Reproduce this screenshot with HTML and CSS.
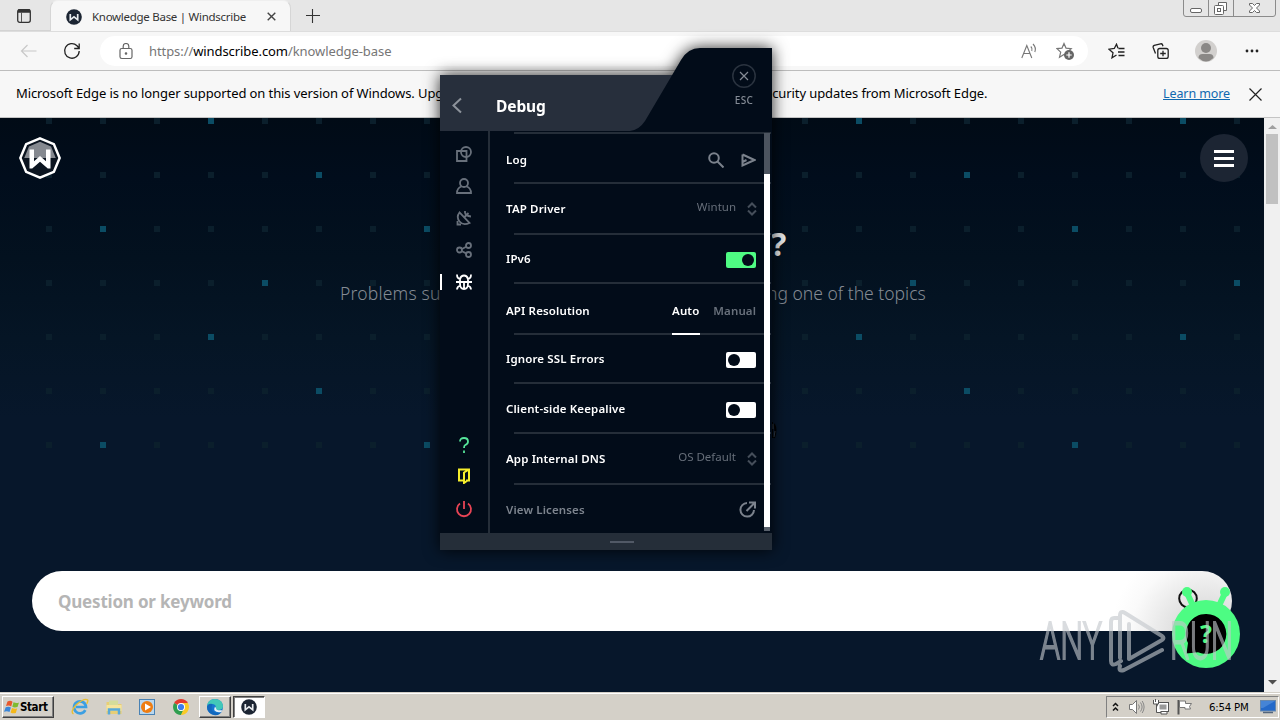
FILE: index.html
```html
<!DOCTYPE html>
<html lang="en">
<head>
<meta charset="utf-8">
<title>Knowledge Base | Windscribe</title>
<link rel="stylesheet" href="styles.css">
</head>
<body>
<svg width="0" height="0" class="defs">
  <defs>
    <symbol id="wlogo" viewBox="0 0 40 40">
      <path d="M20 1.3 33.2 6.8 38.7 20 33.2 33.2 20 38.7 6.8 33.2 1.3 20 6.8 6.8Z" fill="#0b1420" stroke="#fff" stroke-width="2.4"/>
      <path d="M20 4.500 30.500 9l4.500 11H5L9.500 9Z" fill="#858990"/>
      <path d="M14 20h12v4H14Z" fill="#0b1420"/>
      <path d="M10 12h4.300v11L20 18l5.700 5V12H30V30h-2.600L20 23.500l-7.400 6.500H10Z" fill="#fff"/>
    </symbol>
    <symbol id="wbadge" viewBox="0 0 16 16">
      <circle cx="8" cy="8" r="7.800" fill="#1c2533"/>
      <path d="M4.300 5v5.800L8 7.800l3.700 3V5" fill="none" stroke="#e8ebee" stroke-width="1.700"/>
    </symbol>
    <symbol id="updown" viewBox="0 0 10 14"><path d="M1 5.500 5 1.500l4 4M1 8.500l4 4 4-4" fill="none" stroke="#454e5a" stroke-width="2"/></symbol>
  </defs>
</svg>

<div class="screen">
  <header class="tabstrip">
    <div class="tabaction"><svg width="14" height="14" viewBox="0 0 14 14"><rect x=".7" y=".7" width="12.600" height="12.600" rx="2" fill="none" stroke="#333" stroke-width="1.300"/><path d="M1 2.500h12M1 1.500h12" stroke="#333" stroke-width="2.500"/><path d="M4.500 3v10" stroke="#555"/></svg></div>
    <div class="tab">
      <svg width="16" height="16"><use href="#wbadge"/></svg>
      <span class="tabtitle">Knowledge Base | Windscribe</span>
      <svg class="tabclose" width="9" height="9" viewBox="0 0 9 9"><path d="M.7.7l7.600 7.600M8.300.7.7 8.300" stroke="#444" stroke-width="1.400"/></svg>
    </div>
    <svg class="plus" width="14" height="14" viewBox="0 0 14 14"><path d="M6.500 0v14M0 6.500h14" stroke="#333" stroke-width="1.100"/></svg>
    <svg class="wincontrols" width="93" height="17" viewBox="0 0 93 17" fill="none" stroke="#8b8b8b">
      <path d="M.5 0v14q0 2.500 2.500 2.500h87q2.500 0 2.500-2.500V0M25.500 0v16.500M50.500 0v16.500"/>
      <g stroke="#666"><rect x="7.500" y="8.500" width="11" height="4" rx="1.500" fill="#fff"/><path d="M35.500 5.500V2.500h8v8h-3" fill="#fff"/><rect x="31.500" y="5.500" width="9" height="9" rx="1" fill="#fff"/><rect x="34.500" y="8.500" width="3" height="3"/><path d="M66.500 3.500h3l2 2 2-2h3v1.500l-3 3 3 3v1.500h-3l-2-2-2 2h-3V11l3-3-3-3Z" fill="#fff"/></g>
    </svg>
  </header>

  <div class="toolbar">
    <svg class="back" width="17" height="14" viewBox="0 0 17 14"><path d="M16.500 7H1.500M7.500 1l-6 6 6 6" fill="none" stroke="#c8c8c8" stroke-width="1.200"/></svg>
    <svg class="reload" width="18" height="18" viewBox="0 0 18 18"><path d="M16.200 9A7.300 7.300 0 1 1 14 3.700L16 6M16.200 1.500v5h-5" fill="none" stroke="#222" stroke-width="1.300"/></svg>
    <div class="address">
      <svg class="lock" width="14" height="17" viewBox="0 0 14 17" fill="none" stroke="#666" stroke-width="1.200"><rect x="1" y="5.500" width="12" height="10" rx="1.800"/><path d="M4.200 5.500V3.300a2.800 2.800 0 0 1 5.600 0v2.200"/><circle cx="7" cy="10.500" r=".7" fill="#666"/></svg>
      <span class="url">https://<b>windscribe.com</b>/knowledge-base</span>
      <span class="addricons">
        <svg width="17" height="17" viewBox="0 0 17 17" fill="none" stroke="#777" stroke-width="1.100"><path d="M.8 15 5.800 2.500l5 12.500M2.700 10.500h6.300M9.800 3.500q2 2 1 4.500M12 1q3.500 3.500 1.800 8"/></svg>
        <svg width="19" height="18" viewBox="0 0 19 18"><path d="m8 1.500 2 4.600 5.200.5-4 3.500 1 5L8 12.500l-4.500 2.700 1.200-5.100L1 6.600l5-.5Z" fill="none" stroke="#777" stroke-width="1.200"/><circle cx="13" cy="13" r="5" fill="#666"/><path d="M13 10.300v5.400M10.300 13h5.400" stroke="#fff" stroke-width="1.200"/></svg>
      </span>
    </div>
    <div class="tools">
      <svg width="17" height="16" viewBox="0 0 17 16" fill="none" stroke="#222" stroke-width="1.300"><path d="M10 5.200 8.500 1.200 6.300 5.500l-5.300.7 4 3.600-1 5L8.500 12M10.500 5.500h6M10 9h6.500M10.500 12.500h6"/></svg>
      <svg width="17" height="16" viewBox="0 0 17 16" fill="none" stroke="#222" stroke-width="1.300"><rect x="5.800" y="5.500" width="10.400" height="10" rx="2"/><path d="M11 7.700v5.600M8.200 10.500h5.600M3.500 10.500 1.200 4.500Q.8 3 2.200 2.400L8.500.8q1.500-.3 2 1l.5 1.500"/></svg>
      <svg width="22" height="22" viewBox="0 0 22 22"><circle cx="11" cy="11" r="11" fill="#d2d0ce"/><circle cx="11" cy="8" r="5" fill="#8a8886"/><path d="M3.500 18q0-4 4-4h7q4 0 4 4-7.500 7-15 0Z" fill="#8a8886"/></svg>
      <svg width="14" height="4" viewBox="0 0 14 4" fill="#222"><circle cx="2" cy="2" r="1.400"/><circle cx="7" cy="2" r="1.400"/><circle cx="12" cy="2" r="1.400"/></svg>
    </div>
  </div>

  <div class="infobar">
    <span class="notice">Microsoft Edge is no longer supported on this version of Windows. Upg</span>
    <span class="notice rest">ecurity updates from Microsoft Edge.</span>
    <a class="learn">Learn more</a>
    <svg width="13" height="13" viewBox="0 0 13 13"><path d="M.5.5l12 12M12.500.5l-12 12" stroke="#222" stroke-width="1.200"/></svg>
  </div>

  <div class="viewport">
    <main class="site">
      <svg class="dots" width="1264" height="340">
        <defs><pattern id="dotgrid" width="324" height="216" patternUnits="userSpaceOnUse">
          <g fill="#0b1f2c">
            <path d="M46 0h6v6h-6zM100 0h6v6h-6zM154 0h6v6h-6zM262 0h6v6h-6zM316 0h6v6h-6z"/>
            <path d="M46 54h6v6h-6zM100 54h6v6h-6zM154 54h6v6h-6zM208 54h6v6h-6zM262 54h6v6h-6z"/>
            <path d="M46 108h6v6h-6zM154 108h6v6h-6zM208 108h6v6h-6zM262 108h6v6h-6zM316 108h6v6h-6z"/>
            <path d="M46 162h6v6h-6zM100 162h6v6h-6zM154 162h6v6h-6zM208 162h6v6h-6zM316 162h6v6h-6z"/>
          </g>
          <path d="M208 0h6v6h-6zM316 54h6v6h-6zM100 108h6v6h-6zM262 162h6v6h-6z" fill="#0b4c64"/>
        </pattern></defs>
        <rect width="1264" height="340" fill="url(#dotgrid)"/>
      </svg>
      <div class="topnav">
        <svg width="42" height="42"><use href="#wlogo"/></svg>
        <div class="menubtn"><i></i><i></i><i></i></div>
      </div>
      <div class="hero"><span class="herotitle">?</span></div>
      <div class="subtitle"><span class="sub1">Problems su</span><span class="sub2">ng one of the topics</span></div>
      <div class="search"><span>Question or keyword</span>
        <svg width="26" height="26" viewBox="0 0 26 26"><circle cx="13" cy="12.500" r="8.800" fill="none" stroke="#111" stroke-width="2"/></svg>
      </div>
      <svg class="mark" width="9" height="26" viewBox="0 0 9 26"><path d="M2 3v16M4 5q3 6 0 14" fill="none" stroke="#000" stroke-width="2"/><path d="M3 5v5M5 12l-1 6" stroke="#384350"/></svg>
    </main>
    <div class="scroll"><svg width="9" height="4" viewBox="0 0 9 4"><path d="M0 4 4.500 0 9 4Z" fill="#a0a0a0"/></svg><div class="thumb"></div><svg class="down" width="9" height="5" viewBox="0 0 9 5"><path d="M0 0h9L4.500 4.500Z" fill="#505050"/></svg></div>
  </div>

  <footer class="taskbar">
    <div class="start"><svg width="16" height="14" viewBox="0 0 16 14"><path d="M3.500 1.500q3-1.500 5 .3L7.200 6.500Q5 5 2 6Z" fill="#e8582b"/><path d="M9.500 2.300q3 1.400 5.500.2L13.500 7q-3 1-5.200-.2Z" fill="#7fba2f"/><path d="M1.700 7.300q3-1.200 5.200.3L5.500 12Q3 10.800 0 11.800Z" fill="#3a86d8"/><path d="M8 8q3 1.300 5.200.2L11.800 13q-3 .9-5.200-.6Z" fill="#f5b819"/></svg><span>Start</span></div>
    <div class="quick">
      <svg width="18" height="18" viewBox="0 0 18 18"><path d="M14.300 12.200A6 6 0 1 1 15 9H5" fill="none" stroke="#3c9fe2" stroke-width="2.700"/><path d="M2.500 16Q-1 14 5 7 13 0 16.500 1.800q1 1-.8 4" fill="none" stroke="#e9bf34" stroke-width="1.400"/></svg>
      <svg width="18" height="18" viewBox="0 0 18 18"><path d="M1.500 4h5l1.500 2h8.500v10h-15Z" fill="#e8ce75"/><path d="M4 2.500h9V10H4Z" fill="#d5dc9a"/><path d="M1.500 7h15v6h-15Z" fill="#f6e49b"/><path d="M4 16.500v-5h10v5" fill="none" stroke="#59a9d8" stroke-width="2.500"/></svg>
      <svg width="18" height="18" viewBox="0 0 18 18"><rect x="1.500" y="1.500" width="15" height="15" fill="#b9d7ee" stroke="#4982b4"/><circle cx="9" cy="9" r="6" fill="#ee7d12"/><path d="m7 5.500 6 3.500-6 3.500Z" fill="#fff"/></svg>
      <svg width="18" height="18" viewBox="0 0 18 18"><path d="M9 9 2.100 5A8 8 0 0 1 15.900 5Z" fill="#e33b2e"/><path d="M9 9 2.100 5A8 8 0 0 0 9 17l3.500-6Z" fill="#2f9e4f"/><path d="M9 9h3.500L9 17A8 8 0 0 0 15.900 5H9Z" fill="#f9ca26"/><circle cx="9" cy="9" r="4" fill="#fff"/><circle cx="9" cy="9" r="3.100" fill="#3b7ded"/></svg>
    </div>
    <div class="task raised"><svg width="18" height="18" viewBox="0 0 18 18"><circle cx="9" cy="9" r="8" fill="#1675cf"/><path d="M1 8Q2 1 9 1q7.500.5 8 7 0 4-5 4-3-.2-2-2.500 0-3.500-4-3.500-3.500 0-5 2Z" fill="#42c8b8"/><path d="M1 9Q2 5 6.500 6 4 11 8 14q4 2 8-.5Q13 18 8 17 1 15 1 9Z" fill="#1268bd"/><path d="M10 10q0 3 6 2.200L15.500 14q-5 1-7-1.500Q8 10.500 9 8.500Z" fill="#e6f2f8"/></svg></div>
    <div class="task pressed"><svg width="16" height="16"><use href="#wbadge"/></svg></div>
    <div class="tray">
      <svg width="7" height="10" viewBox="0 0 7 10"><path d="m1 4 2.500-2.500L6 4M1 8.500 3.500 6 6 8.500" fill="none" stroke="#111" stroke-width="1.500"/></svg>
      <svg width="16" height="14" viewBox="0 0 16 14"><path d="M.5 4.500h3l4-4v13l-4-4h-3Z" fill="#fff" stroke="#777"/><path d="M9.500 4.500q1.800 2.500 0 5M11.500 2.500q3.200 4.500 0 9M13.200 1q3.800 6 0 12" fill="none" stroke="#888"/></svg>
      <svg width="16" height="16" viewBox="0 0 16 16"><rect x="4.500" y="3.500" width="11" height="9" fill="#fff" stroke="#555"/><rect x="6.500" y="5.500" width="7" height="5" fill="#999"/><path d="M8 13v2h6v-2" fill="#fff" stroke="#555"/><path d="M.5 1v4h5V1M2.500 0v3M3.500 5v8.500H8" fill="#fff" stroke="#555"/></svg>
      <svg width="16" height="16" viewBox="0 0 16 16"><path d="M1.500 1v14.500" stroke="#555" stroke-width="2"/><path d="M2.500 2h6v2.500h6l-2 3 1 2.500H8V8.500H2.500Z" fill="#fff" stroke="#777"/></svg>
      <span class="clock">6:54 PM</span>
      <svg width="16" height="14" viewBox="0 0 16 14"><rect x=".5" y=".5" width="15" height="10.500" fill="#2469c9" stroke="#6788ad"/><path d="M1 1h14L3 8 1 8Z" fill="#4584d6"/><path d="M3 12.500h10" stroke="#53657c" stroke-width="1.500"/></svg>
    </div>
  </footer>
</div>

<svg class="alien" width="72" height="84" viewBox="0 0 72 84">
  <path d="M19 9l8 17M57 9l-8 17" stroke="#4dfc83" stroke-width="6"/>
  <circle cx="19" cy="8" r="5" fill="#4dfc83"/><circle cx="57" cy="8" r="5" fill="#4dfc83"/>
  <circle cx="38" cy="50" r="34" fill="#4dfc83"/>
  <path d="M38 30a20 20 0 1 1-8 38.200L18.500 69.500 20 59A20 20 0 0 1 38 30Z" fill="#000"/>
  <text x="38" y="59" text-anchor="middle" class="alienq">?</text>
</svg>

<svg class="watermark" width="210" height="66" viewBox="0 0 210 66">
  <text x="4" y="48.500" textLength="62" lengthAdjust="spacingAndGlyphs">ANY</text>
  <text x="134" y="48.500" textLength="63" lengthAdjust="spacingAndGlyphs">RUN</text>
  <path d="M82 8h-4q-3 0-3 4v39q0 5 5 3l5-3M84 48V6q0-6 5-3l37 23q3 2 0 4L93 49M84 56q-2 6 4 4l38-20M93 49V14"/>
</svg>

<section class="dialog">
  <svg class="cap" width="332" height="83" viewBox="0 0 332 83">
    <path d="M0 27h235v56H0Z" fill="#272f3c"/>
    <path d="M190 83q9-1 15-10L241 12Q248 0 260 0H332V83Z" fill="#020c19"/>
  </svg>
  <div class="caphead">
    <svg class="chev" width="12" height="17" viewBox="0 0 12 17"><path d="m10 1.500-7.500 7 7.500 7" fill="none" stroke="#8d939b" stroke-width="2"/></svg>
    <span class="title">Debug</span>
    <div class="esc"><svg width="24" height="24" viewBox="0 0 24 24"><circle cx="12" cy="12" r="11.200" fill="none" stroke="#2a333f" stroke-width="1.500"/><path d="m8 8 8 8M16 8l-8 8" stroke="#858c96" stroke-width="1.200"/></svg><span>ESC</span></div>
  </div>
  <div class="dbody">
    <nav class="side">
      <svg width="16" height="16" viewBox="0 0 16 16"><path d="M1 5h9.500v10H1Z"/><circle cx="10" cy="6" r="5"/></svg>
      <svg width="16" height="16" viewBox="0 0 16 16"><circle cx="8" cy="5" r="4"/><path d="M5.500 8.500Q1 10 1 15h14q0-5-4.500-6.500"/></svg>
      <svg width="16" height="16" viewBox="0 0 16 16"><path d="M3.500 2.500Q0 7 3.500 11.500T13.500 13Z"/><path d="M8 7.500l4.500-4.500M9 1v1.500Q9.500 6 15 6.500M1.500 11v3.500H5"/></svg>
      <svg width="16" height="16" viewBox="0 0 16 16"><circle cx="3.500" cy="8" r="2.500"/><circle cx="12.500" cy="3.500" r="2.500"/><circle cx="12.500" cy="12.500" r="2.500"/><path d="m6 7 4.200-2.300M6 9.200l4.200 2.200"/></svg>
      <svg class="on" width="16" height="16" viewBox="0 0 16 16"><path d="M4 5V9.500q0 5.500 4 5.500t4-5.500V5Q11 1.500 8 1.500T4 5ZM0 8h16M1 .5q0 4 3 4.500M15 .5q0 4-3 4.500M1 15.500q0-3 3.500-4M15 15.500q0-3-3.500-4M8 8v7"/></svg>
      <span class="gap"></span>
      <svg class="help" width="16" height="18" viewBox="0 0 16 18"><path d="M4 5.500Q4 2 8 2t4 3.500Q12 8 9.500 8.800 8 9.500 8 12"/><path d="M8 14.500V17"/></svg>
      <svg class="door" width="16" height="16" viewBox="0 0 16 16"><path d="M7 12.500H3V1.500h10v11h-3M8 4.500l5-3M8 4v11l3.500-2.500"/></svg>
      <svg class="power" width="18" height="18" viewBox="0 0 18 18"><path d="M5 3.500a7 7 0 1 0 8 0M9 1v8"/></svg>
    </nav>
    <div class="rows">
      <div class="row low"><span class="lbl">Log</span><span class="ric"><svg width="16" height="16" viewBox="0 0 16 16"><circle cx="6" cy="6" r="4.800"/><path d="m9.500 9.500 6 6"/></svg><svg width="15" height="14" viewBox="0 0 15 14"><path d="M1.500 1.500 13.500 7l-12 5.500V1.500M1.500 9l4-2"/></svg></span></div>
      <div class="row high"><span class="lbl">TAP Driver</span><span class="val">Wintun</span><svg class="ud" width="10" height="14"><use href="#updown"/></svg></div>
      <div class="row"><span class="lbl up">IPv6</span><span class="toggle active"></span></div>
      <div class="row low"><span class="lbl">API Resolution</span><span class="seg"><span class="sel">Auto</span><span>Manual</span></span></div>
      <div class="row"><span class="lbl up">Ignore SSL Errors</span><span class="toggle"></span></div>
      <div class="row low"><span class="lbl up">Client-side Keepalive</span><span class="toggle"></span></div>
      <div class="row high"><span class="lbl">App Internal DNS</span><span class="val">OS Default</span><svg class="ud" width="10" height="14"><use href="#updown"/></svg></div>
      <div class="row"><span class="lbl muted">View Licenses</span><span class="ric"><svg width="17" height="17" viewBox="0 0 17 17"><path d="M8 2a6.800 6.800 0 1 0 7 7M7.500 10 15 2.500M10 1.500h6v6"/></svg></span></div>
      <div class="dscroll"></div>
    </div>
  </div>
  <div class="grip"><i></i></div>
</section>
</body>
</html>
```
FILE: styles.css
```css
* { box-sizing: border-box; }
body { margin: 0; width: 1280px; height: 720px; overflow: hidden; font-family: "Noto Sans", sans-serif; position: relative; }
svg { display: block; flex: none; }
span { white-space: nowrap; }
.defs { position: absolute; }
.screen { width: 1280px; height: 720px; display: flex; flex-direction: column; }

.tabstrip { height: 31px; flex: none; background: #e6e6e6; display: flex; align-items: flex-start; }
.tabaction { width: 50px; height: 31px; padding: 9px 0 0 17px; border-bottom: 1px solid #d3d3d3; }
.tab { width: 241px; height: 32px; background: #f7f7f7; border-radius: 8px 8px 0 0; border: 1px solid #d6d6d6; border-top-color: #efefef; border-bottom: 0; display: flex; align-items: center; padding: 0 14px 0 15px; }
.tabtitle { margin-left: 10px; font-size: 11.500px; color: #333; letter-spacing: -.28px; }
.tabclose { margin-left: auto; }
.plus { margin: 9px 0 0 15px; }
.wincontrols { margin: 0 4px 0 auto; }

.toolbar { height: 39px; flex: none; background: #f7f7f7; border-top: 1px solid #ddd; display: flex; align-items: center; padding-left: 20px; }
.reload { margin-left: 26px; }
.address { margin-left: 19px; width: 988px; height: 30px; border-radius: 15px; background: #fff; display: flex; align-items: center; padding: 0 13px 0 19px; }
.url { margin-left: 16px; font-size: 13px; color: #767676; letter-spacing: -.08px; }
.url b { color: #000; font-weight: 400; }
.addricons { margin-left: auto; display: flex; gap: 18px; align-items: center; }
.tools { display: flex; align-items: center; margin-left: 20px; }
.tools svg:nth-child(2) { margin-left: 27px; }
.tools svg:nth-child(3) { margin-left: 26px; }
.tools svg:nth-child(4) { margin-left: 28px; }

.infobar { height: 48px; flex: none; background: #f7f7f7; border-top: 1px solid #bdbdbd; border-bottom: 1px solid #c4c4c4; display: flex; align-items: center; padding: 0 18px 0 16px; }
.notice { font-size: 13px; color: #000; letter-spacing: -.1px; width: 455px; margin-top: -2px; }
.notice.rest { width: auto; margin-left: 294px; letter-spacing: -.1px; }
.learn { margin-left: auto; margin-right: 19px; margin-top: -2px; font-size: 12.500px; letter-spacing: -.1px; color: #1068b0; text-decoration: underline; }

.viewport { flex: 1; display: flex; min-height: 0; }
.site { width: 1264px; position: relative; background: linear-gradient(#010b16 0, #010d1c 60px, #03111f 140px, #051525 220px, #07172b 300px); }
.dots { position: absolute; left: 0; top: 0; }
.topnav { position: relative; height: 79px; display: flex; justify-content: space-between; align-items: center; padding: 0 16px 0 19px; }
.menubtn { width: 48px; height: 48px; border-radius: 50%; background: #1c2533; display: flex; flex-direction: column; gap: 4px; align-items: center; justify-content: center; padding-top: 1px; }
.menubtn i { width: 20px; height: 3px; background: #fff; }
.hero { position: relative; padding-left: 771px; height: 77px; display: flex; align-items: flex-end; }
.herotitle { font: 700 32px/60px "Noto Sans", sans-serif; color: #e6e8ea; }
.subtitle { position: relative; display: flex; font: 300 17.500px/39px "Noto Sans", sans-serif; color: #858b94; padding: 0 0 0 340px; }
.sub1 { width: 427px; letter-spacing: .2px; }
.search { position: absolute; left: 32px; top: 453px; width: 1200px; height: 60px; border-radius: 30px; display: flex; align-items: center; justify-content: space-between; padding: 1px 31px 0 26px; background: radial-gradient(circle at 1174px 64px, #cfcfcf 0, #e2e2e2 35px, #fafafa 75px, #fff 95px); font: 700 17px "Noto Sans", sans-serif; letter-spacing: -.2px; color: #b5b5b5; }
.search svg { margin-top: -6px; }
.mark { position: absolute; left: 770px; top: 301px; }
.scroll { width: 16px; background: #f0f0f0; display: flex; flex-direction: column; align-items: center; padding: 7px 0 7px; }
.thumb { width: 12px; height: 70px; margin-top: 5px; background: #c1c1c1; }
.down { margin-top: auto; }

.taskbar { height: 28px; flex: none; background: #d4d0c8; box-shadow: inset 0 1px #d4d0c8, inset 0 2px #fff; display: flex; align-items: flex-start; padding: 4px 1px 0 2px; font-family: "DejaVu Sans Condensed", "DejaVu Sans", sans-serif; }
.start { width: 52px; height: 22px; border: 1px solid; border-color: #fff #404040 #404040 #fff; box-shadow: inset -1px -1px #808080; display: flex; align-items: center; padding-left: 1px; font-weight: 700; font-size: 11.500px; color: #000; }
.start span { margin-left: 0; letter-spacing: -.4px; }
.quick { display: flex; gap: 16px; margin: 2px 0 0 17px; }
.quick svg { margin-right: -.3px; }
.task { width: 32px; height: 22px; display: flex; align-items: center; justify-content: center; border: 1px solid; }
.raised { margin-left: 9px; border-color: #fff #404040 #404040 #fff; box-shadow: inset -1px -1px #808080; }
.pressed { margin-left: 2px; background: #fff; border-color: #404040 #fff #fff #404040; box-shadow: inset 1px 1px #808080; }
.tray { margin-left: auto; width: 173px; height: 22px; border: 1px solid; border-color: #808080 #fff #fff #808080; display: flex; align-items: center; padding-left: 5px; }
.tray svg:nth-child(2) { margin-left: 10px; }
.tray svg:nth-child(3) { margin-left: 8px; }
.tray svg:nth-child(4) { margin-left: 8px; }
.clock { margin-left: 16px; font-size: 11.300px; color: #000; letter-spacing: -.2px; width: 51px; }

.alien { position: absolute; left: 1168px; top: 584px; }
.alienq { font: 700 25px "Noto Sans", sans-serif; fill: #4dfc83; }
.watermark { position: absolute; left: 1036px; top: 610px; opacity: .62; overflow: visible; }
.watermark text { font: 300 51px Roboto, sans-serif; fill: #c3c7cc; stroke: #c3c7cc; stroke-width: 1.800; }
.watermark path { fill: none; stroke: #c3c7cc; stroke-width: 4; stroke-linejoin: round; stroke-linecap: round; }

.dialog { position: absolute; left: 440px; top: 48px; width: 332px; height: 502px; display: flex; flex-direction: column; filter: drop-shadow(0 0 8px rgba(0,0,0,.85)); }
.cap { position: absolute; left: 0; top: 0; }
.caphead { position: relative; height: 83px; flex: none; display: flex; align-items: flex-start; padding: 0 16px 0 11px; }
.chev { margin-top: 49px; }
.title { margin: 48px 0 0 33px; font-size: 15.500px; line-height: 20px; font-weight: 700; color: #fff; letter-spacing: -.1px; }
.esc { margin: 16px 0 0 auto; display: flex; flex-direction: column; align-items: center; gap: 6px; font-size: 10px; line-height: 13px; font-weight: 500; letter-spacing: .3px; color: #858c96; }
.dbody { height: 402px; flex: none; background: #020c19; display: flex; }
.side { width: 50px; border-right: 2px solid #252e39; padding: 15px 0 15px; display: flex; flex-direction: column; gap: 16px; align-items: center; position: relative; }
.side::before { content: ""; position: absolute; left: 0; top: 143px; width: 2px; height: 16px; background: #fff; }
.side svg { fill: none; stroke: #68707b; stroke-width: 1.800; }
.side svg.on { stroke: #fff; }
.side .gap { flex: 1; }
.side svg.help { stroke: #56e59a; }
.side svg.door { stroke: #f6ee2b; margin-top: -2px; stroke-width: 2; }
.side svg.power { stroke: #e84455; }
.rows { width: 282px; padding-top: 1px; position: relative; display: grid; grid-template-rows: 50px 51px 49px 51px 49px 50px 51px 49px; }
.row { position: relative; display: flex; align-items: center; padding: 4px 16px 0 16px; }
.row::before { content: ""; position: absolute; left: 24px; right: 1px; top: 0; height: 2px; background: #252e39; }
.low { padding-top: 6px; }
.high { padding-top: 2px; }
.lbl { font-size: 11.500px; font-weight: 600; color: #fff; line-height: 16px; letter-spacing: .14px; }
.up { margin-top: -2px; }
.muted { color: #7d848e; }
.ric { margin-left: auto; display: flex; gap: 17px; align-items: center; }
.ric svg { fill: none; stroke: #7b828c; stroke-width: 2; }
.val { margin-left: auto; font-size: 11.500px; line-height: 16px; color: #666e79; margin-top: -4px; }
.ud { margin-left: 11px; margin-right: -1px; }
.toggle { margin-left: auto; width: 30px; height: 16px; border-radius: 2px; background: #fff; display: flex; align-items: center; padding: 0 2px; }
.toggle::before { content: ""; width: 12px; height: 12px; border-radius: 50%; background: #020c19; }
.active { background: #4ffb83; justify-content: flex-end; }
.seg { margin-left: auto; display: flex; gap: 14px; align-self: stretch; align-items: center; font-size: 11.500px; font-weight: 600; letter-spacing: .1px; color: #68707b; position: relative; }
.sel { color: #fff; }
.sel::after { content: ""; position: absolute; left: 0; bottom: -2px; width: 28px; height: 2px; background: #fff; z-index: 1; }
.dscroll { position: absolute; z-index: 2; left: 274px; top: 2px; width: 6px; height: 398px; background: linear-gradient(#4c545f 41px, #fff 41px, #fff 394px, #59616c 394px); }
.grip { height: 17px; background: #252e39; display: flex; align-items: center; padding-left: 170px; }
.grip i { width: 24px; height: 2px; background: #515966; }
```
